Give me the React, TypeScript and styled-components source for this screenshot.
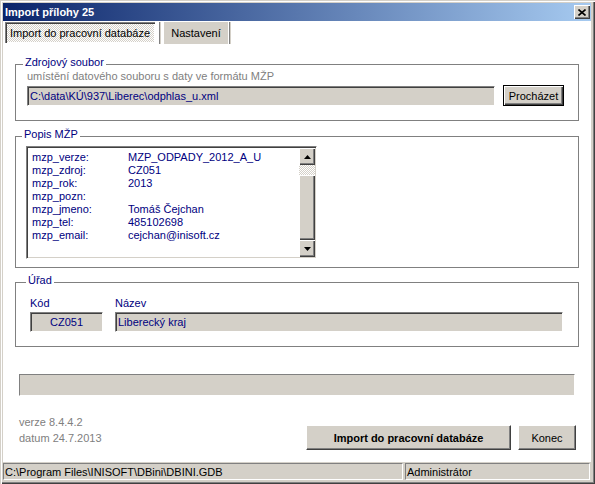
import React from "react";
import styled, { createGlobalStyle } from "styled-components";

const Global = createGlobalStyle`
  html, body { margin: 0; padding: 0; }
  body {
    width: 595px; height: 484px; overflow: hidden;
    font-family: "Liberation Sans", Arial, sans-serif;
    font-size: 11px;
  }
  * { box-sizing: border-box; }
`;

const Window = styled.div`
  width: 595px;
  height: 484px;
  display: flex;
  flex-direction: column;
  background: #d4d0c8;
  padding: 3px 4px 3px 3px;
  box-shadow: inset 1px 1px #d4d0c8, inset 2px 2px #fff, inset -1px -1px #404040, inset -2px -2px #808080;
`;

const TitleBar = styled.div`
  flex: none;
  height: 18px;
  display: flex;
  align-items: center;
  justify-content: space-between;
  padding: 0 1px 0 2px;
  background: linear-gradient(to right, #0a246a, #a6caf0);
  color: #fff;
  font-weight: bold;
  font-size: 11px;
`;

const CloseButton = styled.div`
  width: 16px;
  height: 14px;
  background: #d4d0c8;
  display: flex;
  align-items: center;
  justify-content: center;
  box-shadow: inset 1px 1px #fff, inset -1px -1px #404040, inset -2px -2px #808080;
`;

const Content = styled.div`
  flex: 1;
  display: flex;
  flex-direction: column;
  background: #fff;
  min-height: 0;
`;

const TabStrip = styled.div`
  flex: none;
  height: 23px;
  display: flex;
  align-items: flex-start;
  padding: 1px 0 0 2px;
`;

const Tab = styled.div<{ $active?: boolean; $w: number }>`
  width: ${(p) => p.$w}px;
  height: ${(p) => (p.$active ? 21 : 22)}px;
  display: flex;
  align-items: center;
  justify-content: center;
  color: #000;
  background: ${(p) =>
    p.$active ? "repeating-conic-gradient(#d4d0c8 0 25%, #fff 0 50%) 0 0 / 2px 2px" : "#d4d0c8"};
  box-shadow: ${(p) =>
    p.$active ? "inset 1px 1px #808080, inset 2px 2px #404040, inset -1px -1px #fff" : "none"};
  padding-top: ${(p) => (p.$active ? 1 : 0)}px;
`;

const TabSep = styled.div<{ $ml: number; $mr: number }>`
  width: 2px;
  height: 22px;
  margin: 0 ${(p) => p.$mr}px 0 ${(p) => p.$ml}px;
  border-left: 1px solid #808080;
  border-right: 1px solid #d4d0c8;
`;

const Panels = styled.div`
  padding: 0 12px;
  display: flex;
  flex-direction: column;
`;

const Group = styled.fieldset<{ $mt: number; $pad: string }>`
  margin: ${(p) => p.$mt}px 0 0;
  padding: ${(p) => p.$pad};
  border: 1px solid #808080;
  min-width: 0;
`;

const Legend = styled.legend`
  padding: 0 2px 3px;
  margin-left: -4px;
  color: #000080;
  line-height: 13px;
  font-size: 11px;
`;

const Hint = styled.div`
  color: #808080;
  line-height: 13px;
  margin-top: -2px;
`;

const FileRow = styled.div`
  display: flex;
  align-items: center;
  gap: 8px;
  margin-top: 2px;
  height: 21px;
`;

const Field = styled.div<{ $w?: number; $center?: boolean }>`
  ${(p) => (p.$w ? `width: ${p.$w}px; flex: none;` : "flex: 1;")}
  height: 20px;
  background: #d4d0c8;
  color: #000080;
  display: flex;
  align-items: center;
  justify-content: ${(p) => (p.$center ? "center" : "flex-start")};
  padding: 0 2px;
  border: 1px solid;
  border-color: #808080 #fff #fff #808080;
  box-shadow: inset 1px 1px #404040;
  white-space: nowrap;
`;

const DefaultButton = styled.div`
  width: 61px;
  height: 21px;
  flex: none;
  background: #d4d0c8;
  border: 1px solid #000;
  box-shadow: inset 1px 1px #fff, inset -1px -1px #404040, inset -2px -2px #808080;
  display: flex;
  align-items: center;
  justify-content: center;
  color: #000;
`;

const Memo = styled.div`
  margin-top: 2px;
  width: 291px;
  height: 113px;
  display: flex;
  border: 1px solid;
  border-color: #808080 #fff #fff #808080;
  box-shadow: inset 1px 1px #404040, inset -1px -1px #d4d0c8;
  padding: 1px;
`;

const MemoLines = styled.div`
  flex: 1;
  display: grid;
  grid-template-columns: 96px 1fr;
  grid-auto-rows: 13px;
  align-content: start;
  padding: 3px 0 0 4px;
  color: #000080;
  line-height: 13px;
`;

const ScrollBar = styled.div`
  width: 16px;
  flex: none;
  display: flex;
  flex-direction: column;
`;

const ScrollBtn = styled.div`
  height: 17px;
  flex: none;
  background: #d4d0c8;
  display: flex;
  align-items: center;
  justify-content: center;
  box-shadow: inset 1px 1px #fff, inset -1px -1px #404040, inset -2px -2px #808080;
`;

const Track = styled.div<{ $h: number }>`
  height: ${(p) => p.$h}px;
  flex: none;
  background: repeating-conic-gradient(#d4d0c8 0 25%, #fff 0 50%) 0 0 / 2px 2px;
`;

const Thumb = styled.div`
  flex: 1;
  background: #d4d0c8;
  box-shadow: inset 1px 1px #fff, inset -1px -1px #404040, inset -2px -2px #808080;
`;

const OfficeGrid = styled.div`
  display: grid;
  grid-template-columns: 73px 1fr;
  column-gap: 12px;
  row-gap: 2px;
  margin-top: 7px;
`;

const FieldLabel = styled.div`
  color: #000080;
  line-height: 13px;
`;

const Progress = styled.div`
  margin: 27px 16px 0 16px;
  height: 22px;
  background: #d4d0c8;
  border: 1px solid;
  border-color: #808080 #fff #fff #808080;
`;

const Footer = styled.div`
  display: flex;
  justify-content: space-between;
  align-items: flex-start;
  margin-top: 18px;
  padding: 0 15px 0 16px;
`;

const Version = styled.div`
  color: #808080;
  line-height: 16px;
`;

const Buttons = styled.div`
  display: flex;
  gap: 7px;
  margin-top: 11px;
`;

const Button = styled.div<{ $w: number; $bold?: boolean }>`
  width: ${(p) => p.$w}px;
  height: 25px;
  background: #d4d0c8;
  display: flex;
  align-items: center;
  justify-content: center;
  color: #000;
  font-weight: ${(p) => (p.$bold ? "bold" : "normal")};
  border: 1px solid;
  border-color: #fff #404040 #404040 #fff;
  box-shadow: inset -1px -1px #808080;
`;

const StatusBar = styled.div`
  flex: none;
  height: 19px;
  display: flex;
  gap: 2px;
  padding: 1px 1px 1px 0;
  background: #d4d0c8;
`;

const StatusPanel = styled.div<{ $w?: number }>`
  ${(p) => (p.$w ? `width: ${p.$w}px; flex: none;` : "flex: 1;")}
  border: 1px solid;
  border-color: #808080 #fff #fff #808080;
  display: flex;
  align-items: center;
  padding-left: 1px;
  color: #000;
  white-space: nowrap;
`;

const Arrow = ({ up }: { up?: boolean }) => (
  <svg width="7" height="4" viewBox="0 0 7 4">
    <polygon points={up ? "3.5,0 7,4 0,4" : "0,0 7,0 3.5,4"} fill="#000" />
  </svg>
);

const rows: [string, string][] = [
  ["mzp_verze:", "MZP_ODPADY_2012_A_U"],
  ["mzp_zdroj:", "CZ051"],
  ["mzp_rok:", "2013"],
  ["mzp_pozn:", ""],
  ["mzp_jmeno:", "Tomáš Čejchan"],
  ["mzp_tel:", "485102698"],
  ["mzp_email:", "cejchan@inisoft.cz"],
];

export default function App() {
  return (
    <>
      <Global />
      <Window>
        <TitleBar>
          <span>Import přílohy 25</span>
          <CloseButton>
            <svg width="8" height="7" viewBox="0 0 8 7">
              <path d="M0.5 0.5 L7.5 6.5 M7.5 0.5 L0.5 6.5" stroke="#000" strokeWidth="1.6" />
            </svg>
          </CloseButton>
        </TitleBar>
        <Content>
          <TabStrip>
            <Tab $active $w={150}>Import do pracovní databáze</Tab>
            <TabSep $ml={4} $mr={3} />
            <Tab $w={64}>Nastavení</Tab>
            <TabSep $ml={1} $mr={0} />
          </TabStrip>
          <Panels>
            <Group $mt={12} $pad="0 14px 14px 11px">
              <Legend>Zdrojový soubor</Legend>
              <Hint>umístění datového souboru s daty ve formátu MŽP</Hint>
              <FileRow>
                <Field>C:\data\KÚ\937\Liberec\odphlas_u.xml</Field>
                <DefaultButton>Procházet</DefaultButton>
              </FileRow>
            </Group>
            <Group $mt={7} $pad="0 14px 8px 10px">
              <Legend>Popis MŽP</Legend>
              <Memo>
                <MemoLines>
                  {rows.map(([k, v]) => (
                    <React.Fragment key={k}>
                      <span>{k}</span>
                      <span>{v}</span>
                    </React.Fragment>
                  ))}
                </MemoLines>
                <ScrollBar>
                  <ScrollBtn>
                    <Arrow up />
                  </ScrollBtn>
                  <Track $h={10} />
                  <Thumb />
                  <ScrollBtn>
                    <Arrow />
                  </ScrollBtn>
                </ScrollBar>
              </Memo>
            </Group>
            <Group $mt={6} $pad="0 15px 14px 14px">
              <Legend>Úřad</Legend>
              <OfficeGrid>
                <FieldLabel>Kód</FieldLabel>
                <FieldLabel>Název</FieldLabel>
                <Field $center>CZ051</Field>
                <Field>Liberecký kraj</Field>
              </OfficeGrid>
            </Group>
          </Panels>
          <Progress />
          <Footer>
            <Version>
              <div>verze 8.4.4.2</div>
              <div>datum 24.7.2013</div>
            </Version>
            <Buttons>
              <Button $w={205} $bold>Import do pracovní databáze</Button>
              <Button $w={58}>Konec</Button>
            </Buttons>
          </Footer>
        </Content>
        <StatusBar>
          <StatusPanel $w={400}>C:\Program Files\INISOFT\DBini\DBINI.GDB</StatusPanel>
          <StatusPanel>Administrátor</StatusPanel>
        </StatusBar>
      </Window>
    </>
  );
}
